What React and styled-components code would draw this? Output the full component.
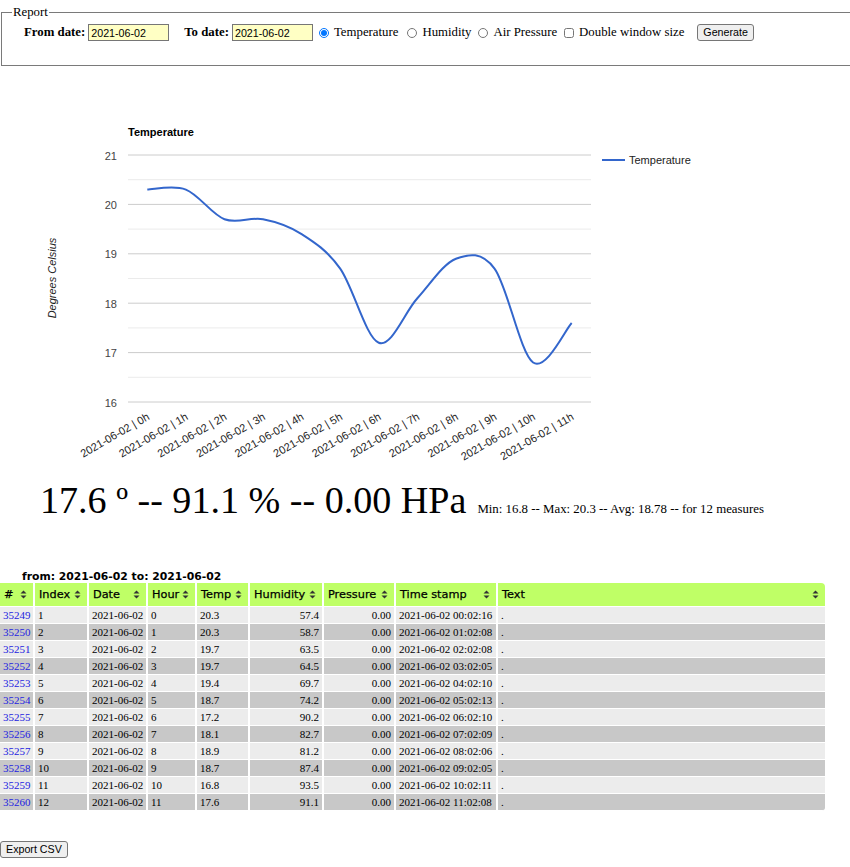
import React from "react";
import styled, { createGlobalStyle } from "styled-components";

// Page base: the original is a plain HTML report page shown at 80% zoom
const GlobalStyle = createGlobalStyle`
  html, body {
    margin: 0;
    padding: 0;
    overflow: hidden;
    background: #fff;
  }
  body {
    font-family: "Liberation Serif", "Times New Roman", serif;
    font-size: 12.8px;
    color: #000;
  }
`;

const Page = styled.div`
  display: flex;
  flex-direction: column;
  align-items: flex-start;
`;

// Report form
const Fieldset = styled.fieldset`
  box-sizing: border-box;
  align-self: stretch;
  margin: 5px -20px 0 1px;
  padding: 0 10px 24px 10px;
  border: 1px solid #7a7a7a;
  min-width: 0;
`;

const Legend = styled.legend`
  padding: 0 1px;
  line-height: 15px;
  font-size: 12.8px;
`;

const FormRow = styled.div`
  display: flex;
  align-items: center;
  margin: 4px 0 0 12px;
  white-space: nowrap;
`;

const FieldLabel = styled.label`
  font-weight: bold;
  margin-left: ${(p) => p.$gap || 0}px;
`;

const DateInput = styled.input`
  box-sizing: border-box;
  width: 81px;
  height: 17px;
  margin: 0 0 0 3px;
  padding: 1px 2px;
  border: 1px solid #767676;
  background: #ffffc4;
  font-family: "Liberation Sans", Arial, sans-serif;
  font-size: 10.7px;
  color: #000;
  outline: none;
`;

const Radio = styled.input`
  width: 10px;
  height: 10px;
  margin: 0 5px 0 ${(p) => p.$gap || 6}px;
`;

const OptionText = styled.span``;

const Button = styled.button`
  box-sizing: border-box;
  height: 17px;
  margin-left: ${(p) => p.$gap || 0}px;
  padding: 0 5px;
  border: 1px solid #767676;
  border-radius: 3px;
  background: #efefef;
  font-family: "Liberation Sans", Arial, sans-serif;
  font-size: 10.7px;
  color: #000;
  line-height: 15px;
`;

// Chart
const ChartSvg = styled.svg`
  display: block;
  width: 850px;
  height: 412px;
  font-family: "Liberation Sans", Arial, sans-serif;
`;

// Current reading
const Reading = styled.div`
  padding-left: 40px;
  font-size: 38.1px;
  line-height: 44px;
  white-space: nowrap;
`;

const Summary = styled.span`
  font-size: 12.85px;
  margin-left: 11px;
`;

// Data table
const TableWrap = styled.div`
  margin-top: 39px;
`;

const Caption = styled.div`
  padding-left: 22px;
  font-family: "DejaVu Sans", Verdana, sans-serif;
  font-weight: bold;
  font-size: 10.8px;
  line-height: 13px;
`;

const Table = styled.table`
  width: 825px;
  table-layout: fixed;
  border-collapse: separate;
  border-spacing: 0;
`;

const Th = styled.th`
  box-sizing: border-box;
  width: ${(p) => p.$w}px;
  height: 24px;
  padding: 0 6px 0 4px;
  background: #bfff66;
  border-right: ${(p) => (p.$last ? 0 : 2)}px solid #fff;
  border-bottom: 1px solid #fff;
  border-top-right-radius: ${(p) => (p.$last ? 4 : 0)}px;
  font-family: "DejaVu Sans", Verdana, sans-serif;
  font-weight: normal;
  font-size: 11.3px;
  -webkit-text-stroke: 0.25px #000;
  text-align: left;
`;

const ThInner = styled.span`
  display: flex;
  align-items: center;
  justify-content: space-between;
`;

const Td = styled.td`
  box-sizing: border-box;
  height: 17px;
  padding: 0 3px;
  background: ${(p) => (p.$odd ? "#c8c8c8" : "#ececec")};
  border-right: ${(p) => (p.$last ? 0 : 2)}px solid #fff;
  border-bottom: 1px solid #fff;
  border-bottom-right-radius: ${(p) => (p.$corner ? 3 : 0)}px;
  text-align: ${(p) => (p.$num ? "right" : "left")};
  font-size: 11px;
  line-height: 16px;
  white-space: nowrap;
  overflow: hidden;
`;

const RowLink = styled.a`
  color: #2222e0;
  text-decoration: none;
`;

const ExportButton = styled(Button)`
  margin-top: 30px;
  height: 17px;
  padding: 0 5px;
`;

const SortIcon = () => (
  <svg width="7" height="9" viewBox="0 0 7 9">
    <polygon points="0.5,3.6 3.5,0.4 6.5,3.6" fill="#333" />
    <polygon points="0.5,5.4 3.5,8.6 6.5,5.4" fill="#333" />
  </svg>
);

const values = [20.3, 20.3, 19.7, 19.7, 19.4, 18.7, 17.2, 18.1, 18.9, 18.7, 16.8, 17.6];
const OY = 67; // page y of the chart top

const xAt = (i) => 147.3 + 38.58 * i;
const yAt = (v) => 403 - (v - 16) * 49.4 - OY;

const curvePath = () => {
  const pts = values.map((v, i) => [xAt(i), yAt(v)]);
  let d = `M${pts[0][0]},${pts[0][1]}`;
  for (let i = 0; i < pts.length - 1; i++) {
    const p0 = pts[i - 1] || pts[i];
    const p1 = pts[i];
    const p2 = pts[i + 1];
    const p3 = pts[i + 2] || pts[i + 1];
    const c1 = [p1[0] + (p2[0] - p0[0]) / 6, p1[1] + (p2[1] - p0[1]) / 6];
    const c2 = [p2[0] - (p3[0] - p1[0]) / 6, p2[1] - (p3[1] - p1[1]) / 6];
    d += ` C${c1[0].toFixed(2)},${c1[1].toFixed(2)} ${c2[0].toFixed(2)},${c2[1].toFixed(2)} ${p2[0].toFixed(2)},${p2[1].toFixed(2)}`;
  }
  return d;
};

const Chart = () => {
  const major = [21, 20, 19, 18, 17, 16];
  const minor = [20.5, 19.5, 18.5, 17.5, 16.5];
  return (
    <ChartSvg viewBox="0 0 850 412">
      <text x="128" y={137 - OY} fontSize="11" fontWeight="bold" fill="#000">
        Temperature
      </text>
      {minor.map((v) => (
        <line key={v} x1="128" x2="591" y1={yAt(v)} y2={yAt(v)} stroke="#ebebeb" strokeWidth="1" />
      ))}
      {major.map((v) => (
        <g key={v}>
          <line x1="128" x2="591" y1={yAt(v)} y2={yAt(v)} stroke="#cccccc" strokeWidth="1" />
          <text x="117" y={yAt(v) + 4.5} fontSize="11" fill="#444" textAnchor="end">
            {v}
          </text>
        </g>
      ))}
      <text
        x="56"
        y={279 - OY}
        fontSize="11"
        fontStyle="italic"
        fill="#222"
        textAnchor="middle"
        transform={`rotate(-90 56 ${279 - OY})`}
      >
        Degrees Celsius
      </text>
      <path d={curvePath()} fill="none" stroke="#3366cc" strokeWidth="2" />
      {values.map((v, i) => {
        const x = xAt(i) + 3;
        const y = 420 - OY;
        return (
          <text key={i} x={x} y={y} fontSize="11" fill="#222" textAnchor="end" transform={`rotate(-30 ${x} ${y})`}>
            {`2021-06-02 | ${i}h`}
          </text>
        );
      })}
      <line x1="602" x2="625" y1={161 - OY} y2={161 - OY} stroke="#3366cc" strokeWidth="2" />
      <text x="629" y={165 - OY} fontSize="11" fill="#222">
        Temperature
      </text>
    </ChartSvg>
  );
};

const columns = [
  { title: "#", w: 35 },
  { title: "Index", w: 54 },
  { title: "Date", w: 59 },
  { title: "Hour", w: 49 },
  { title: "Temp", w: 53 },
  { title: "Humidity", w: 74 },
  { title: "Pressure", w: 72 },
  { title: "Time stamp", w: 102 },
  { title: "Text", w: 327 },
];

const rows = [
  [35249, 1, 0, "20.3", "57.4", "00:02:16"],
  [35250, 2, 1, "20.3", "58.7", "01:02:08"],
  [35251, 3, 2, "19.7", "63.5", "02:02:08"],
  [35252, 4, 3, "19.7", "64.5", "03:02:05"],
  [35253, 5, 4, "19.4", "69.7", "04:02:10"],
  [35254, 6, 5, "18.7", "74.2", "05:02:13"],
  [35255, 7, 6, "17.2", "90.2", "06:02:10"],
  [35256, 8, 7, "18.1", "82.7", "07:02:09"],
  [35257, 9, 8, "18.9", "81.2", "08:02:06"],
  [35258, 10, 9, "18.7", "87.4", "09:02:05"],
  [35259, 11, 10, "16.8", "93.5", "10:02:11"],
  [35260, 12, 11, "17.6", "91.1", "11:02:08"],
];

const App = () => {
  return (
    <Page>
      <GlobalStyle />
      <Fieldset>
        <Legend>Report</Legend>
        <FormRow>
          <FieldLabel>From date:</FieldLabel>
          <DateInput type="text" defaultValue="2021-06-02" />
          <FieldLabel $gap={15}>To date:</FieldLabel>
          <DateInput type="text" defaultValue="2021-06-02" />
          <Radio type="radio" name="kind" defaultChecked />
          <OptionText>Temperature</OptionText>
          <Radio type="radio" name="kind" $gap={9} />
          <OptionText>Humidity</OptionText>
          <Radio type="radio" name="kind" $gap={7} />
          <OptionText>Air Pressure</OptionText>
          <Radio type="checkbox" $gap={7} />
          <OptionText>Double window size</OptionText>
          <Button $gap={13}>Generate</Button>
        </FormRow>
      </Fieldset>

      <Chart />

      <Reading>
        17.6 º -- 91.1 % -- 0.00 HPa
        <Summary>Min: 16.8 -- Max: 20.3 -- Avg: 18.78 -- for 12 measures</Summary>
      </Reading>

      <TableWrap>
        <Caption>from: 2021-06-02 to: 2021-06-02</Caption>
        <Table>
          <thead>
            <tr>
              {columns.map((c, i) => (
                <Th key={c.title} $w={c.w} $last={i === columns.length - 1}>
                  <ThInner>
                    {c.title}
                    <SortIcon />
                  </ThInner>
                </Th>
              ))}
            </tr>
          </thead>
          <tbody>
            {rows.map((r, i) => {
              const odd = i % 2 === 1;
              const lastRow = i === rows.length - 1;
              return (
                <tr key={r[0]}>
                  <Td $odd={odd}>
                    <RowLink href="#">{r[0]}</RowLink>
                  </Td>
                  <Td $odd={odd}>{r[1]}</Td>
                  <Td $odd={odd}>2021-06-02</Td>
                  <Td $odd={odd}>{r[2]}</Td>
                  <Td $odd={odd}>{r[3]}</Td>
                  <Td $odd={odd} $num>{r[4]}</Td>
                  <Td $odd={odd} $num>0.00</Td>
                  <Td $odd={odd}>2021-06-02 {r[5]}</Td>
                  <Td $odd={odd} $last $corner={lastRow}>.</Td>
                </tr>
              );
            })}
          </tbody>
        </Table>
      </TableWrap>

      <ExportButton>Export CSV</ExportButton>
    </Page>
  );
};

export default App;
